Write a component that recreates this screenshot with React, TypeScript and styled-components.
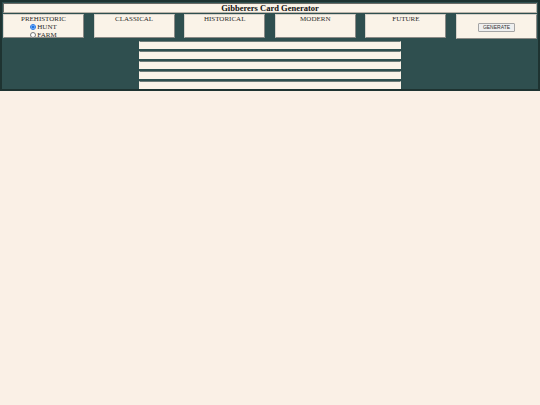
import styled, { createGlobalStyle } from 'styled-components'

const GlobalStyle = createGlobalStyle`
  html, body {
    margin: 0;
    padding: 0;
    background: #faf0e6;
    font-family: "Liberation Serif", "Times New Roman", serif;
  }
`

const Frame = styled.div`
  background: #2f4f4f;
  border: 2px solid #1e3331;
  padding: 1px 1px 0 1px;
  display: flex;
  flex-direction: column;
  gap: 1px;
`

const TitleBar = styled.div`
  height: 10px;
  background: #faf3e8;
  border: 1px solid #b9b4aa;
  border-top-color: #6b6b66;
  border-left-color: #6b6b66;
  box-sizing: border-box;
  display: flex;
  align-items: center;
  justify-content: center;
  font-size: 8.5px;
  font-weight: bold;
  color: #111;
`

const EraRow = styled.div`
  display: flex;
  justify-content: space-between;
  align-items: flex-start;
`

const EraCard = styled.div<{ $tall?: boolean }>`
  width: 81px;
  height: ${({ $tall }) => ($tall ? '25px' : '24px')};
  box-sizing: border-box;
  background: #faf3e8;
  border: 1px solid #8a8a86;
  border-top-color: #d6d2ca;
  border-left-color: #d6d2ca;
  display: flex;
  flex-direction: column;
  align-items: center;
  justify-content: ${({ $tall }) => ($tall ? 'center' : 'flex-start')};
  font-size: 7px;
  line-height: 8px;
  color: #2b2b2b;
`

const RadioLabel = styled.label`
  display: flex;
  align-items: center;
  font-size: 7px;
  line-height: 8px;
  color: #2b2b2b;
`

const Radio = styled.input`
  width: 6px;
  height: 6px;
  margin: 0 1px 0 0;
  accent-color: #1a73e8;
`

const GenerateButton = styled.button`
  font-family: "Liberation Sans", Arial, sans-serif;
  font-size: 5px;
  height: 9px;
  padding: 0 4px;
  margin-top: 1px;
  background: #efefef;
  border: 1px solid #a5a5a5;
  border-radius: 1px;
  color: #333;
  line-height: 7px;
`

const Lines = styled.div`
  align-self: center;
  width: 262px;
  display: flex;
  flex-direction: column;
  gap: 2px;
  margin-top: 1px;
`

const LineInput = styled.input`
  height: 8px;
  box-sizing: border-box;
  margin: 0;
  padding: 0;
  background: #faf3e8;
  border: 1px solid #faf3e8;
  border-top-color: #6f7c78;
  outline: none;
`

const eras = ['CLASSICAL', 'HISTORICAL', 'MODERN', 'FUTURE']

export default function App() {
  return (
    <>
      <GlobalStyle />
      <Frame>
        <TitleBar>Gibberers Card Generator</TitleBar>
        <EraRow>
          <EraCard>
            PREHISTORIC
            <RadioLabel>
              <Radio type="radio" name="pre" defaultChecked />
              HUNT
            </RadioLabel>
            <RadioLabel>
              <Radio type="radio" name="pre" />
              FARM
            </RadioLabel>
          </EraCard>
          {eras.map((e) => (
            <EraCard key={e}>{e}</EraCard>
          ))}
          <EraCard $tall>
            <GenerateButton>GENERATE</GenerateButton>
          </EraCard>
        </EraRow>
        <Lines>
          {[0, 1, 2, 3, 4].map((i) => (
            <LineInput key={i} type="text" />
          ))}
        </Lines>
      </Frame>
    </>
  )
}
